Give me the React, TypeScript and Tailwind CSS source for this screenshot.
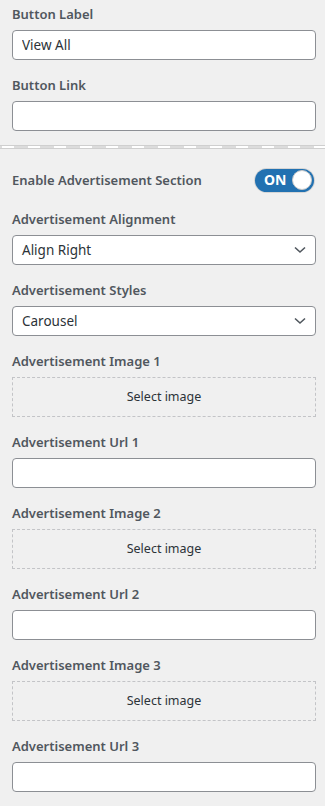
import React from "react";

const font = { fontFamily: '"Noto Sans", "Open Sans", Arial, sans-serif' };

function Label({ children }: { children: React.ReactNode }) {
  return (
    <div className="h-5 leading-[23px] text-[13px] font-semibold text-[#50575e] mb-[7px] whitespace-nowrap">
      {children}
    </div>
  );
}

function TextInput({ value = "" }: { value?: string }) {
  return (
    <input
      readOnly
      value={value}
      className="block w-full h-[30px] px-[9px] bg-white border border-[#8c8f94] rounded-[4px] text-[13.5px] text-[#2c3338] outline-none"
    />
  );
}

function Select({ value }: { value: string }) {
  return (
    <div className="flex items-center justify-between h-[30px] pl-[9px] pr-[9px] bg-white border border-[#8c8f94] rounded-[4px] text-[13.5px] text-[#2c3338]">
      <span>{value}</span>
      <svg width="12" height="8" viewBox="0 0 12 8" fill="none">
        <polyline points="1,1.5 6,6 11,1.5" stroke="#50575e" strokeWidth="1.6" />
      </svg>
    </div>
  );
}

function ImagePicker() {
  return (
    <div className="flex items-center justify-center h-10 border border-dashed border-[#c3c4c7] text-[12.5px] text-[#2c3338]">
      Select image
    </div>
  );
}

function Field({ label, children }: { label: string; children: React.ReactNode }) {
  return (
    <div className="mb-[14px]">
      <Label>{label}</Label>
      {children}
    </div>
  );
}

export default function App() {
  return (
    <div className="w-[325px] h-[806px] overflow-hidden bg-[#f0f0f0]" style={font}>
      <div className="pl-3 pr-[9px] pt-[3px]">
        <Field label="Button Label">
          <TextInput value="View All" />
        </Field>
        <Field label="Button Link">
          <TextInput />
        </Field>
      </div>

      <div className="mt-[3px] h-[4px] border-y border-[#cfcfcf] bg-[repeating-linear-gradient(90deg,#dcdcdc_0px,#dcdcdc_2px,#ffffff_2px,#ffffff_14px,#dcdcdc_14px,#dcdcdc_26px)]" />

      <div className="pl-3 pr-[9px] pt-[19px]">
        <div className="flex items-center justify-between h-6 mb-[16px]">
          <span className="text-[13px] font-semibold text-[#50575e] pt-[1px]">Enable Advertisement Section</span>
          <div className="mr-[2px] flex items-center justify-between w-[59px] h-[23px] rounded-full bg-[#2271b1] ring-1 ring-[#d5d5d5] pl-[9px] pr-[2px]">
            <span className="text-[14px] font-bold text-white leading-none">ON</span>
            <span className="w-[20px] h-[20px] rounded-full bg-white border border-[#c9c9c9]" />
          </div>
        </div>

        <Field label="Advertisement Alignment">
          <Select value="Align Right" />
        </Field>
        <Field label="Advertisement Styles">
          <Select value="Carousel" />
        </Field>
        <Field label="Advertisement Image 1">
          <ImagePicker />
        </Field>
        <Field label="Advertisement Url 1">
          <TextInput />
        </Field>
        <Field label="Advertisement Image 2">
          <ImagePicker />
        </Field>
        <Field label="Advertisement Url 2">
          <TextInput />
        </Field>
        <Field label="Advertisement Image 3">
          <ImagePicker />
        </Field>
        <Field label="Advertisement Url 3">
          <TextInput />
        </Field>
      </div>
    </div>
  );
}
